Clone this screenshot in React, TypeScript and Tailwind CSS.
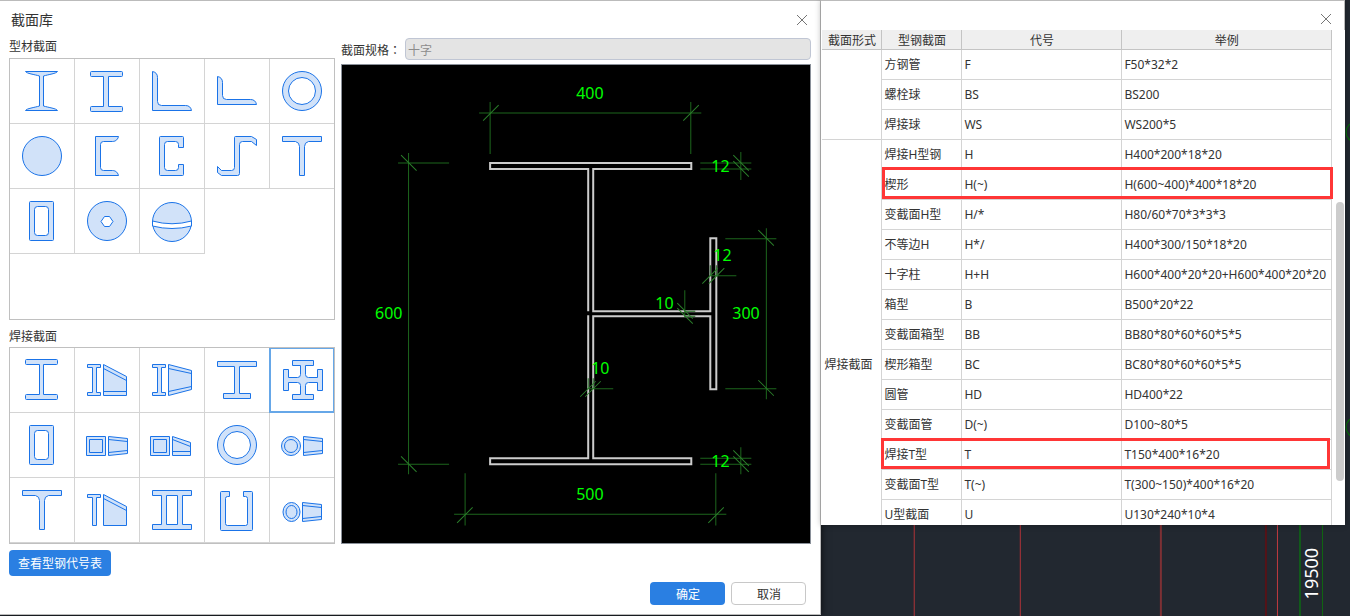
import React from "react";

interface SectionShape {
    id: string;
    label: string;
    icon: React.ReactNode;
}

interface CodeRow {
    name: string;
    code: string;
    example: string;
}

const Ring = () => (
    <>
        <circle cx="32" cy="32" r="19.5" />
        <circle cx="32" cy="32" r="13.5" className="fill-white" />
    </>
);

const Box = () => (
    <>
        <rect x="19.5" y="12.5" width="24" height="39" rx="1" />
        <rect x="24.5" y="17.5" width="14" height="29" rx="3" className="fill-white" />
    </>
);

const Tee = () => <path d="M12.5 12.5h39v5h-13q-4 1-4 5v29h-5v-29q0-4-4-5h-13z" />;

const SmallBeam = () => (
    <path d="M12.5 16.5h13v3h-4v25h4v3h-13v-3h5v-25h-5z" />
);

const Square = () => (
    <>
        <path d="M11.5 23.5h19v19h-19z" />
        <path d="M14.5 26.5h13v13h-13z" />
    </>
);

const Cone = () => (
    <>
        <path d="M33.5 23.5l19 2v15l-19 2z" />
        <path d="M33.5 26.5l19 2M33.5 39.5l19-2" />
    </>
);

const profileSections: SectionShape[] = [
    {
        id: "i-beam",
        label: "工字钢",
        icon: <path d="M15.5 12.5h32c-1 2-9 3-14 4.5v30c5 1.5 13 2.5 14 4.5h-32c1-2 9-3 14-4.5v-30c-5-1.5-13-2.5-14-4.5z" />,
    },
    {
        id: "h-beam",
        label: "H型钢",
        icon: <path d="M16.5 12.5h30q1 0 1 1v3q0 1-1 1h-13v30h13q1 0 1 1v3q0 1-1 1h-30q-1 0-1-1v-3q0-1 1-1h12v-30h-12q-1 0-1-1v-3q0-1 1-1z" />,
    },
    {
        id: "angle",
        label: "等边角钢",
        icon: <path d="M12.5 12.5q5 1 5 6v24q0 4 4 4h24q5 0 6 5h-39z" />,
    },
    {
        id: "unequal-angle",
        label: "不等边角钢",
        icon: <path d="M12.5 17.5q5 1 5 6v13q0 4 4 4h24q5 0 6 5h-39z" />,
    },
    { id: "pipe", label: "圆管", icon: <Ring /> },
    { id: "round", label: "圆钢", icon: <circle cx="32" cy="32" r="19.5" /> },
    {
        id: "channel",
        label: "槽钢",
        icon: <path d="M20.5 12.5h23c-1 4-4 5-6 5h-9q-3 0-3 3v23q0 3 3 3h9c2 0 5 1 6 5h-23z" />,
    },
    {
        id: "c-steel",
        label: "C型钢",
        icon: <path d="M20.5 12.5h22q1 0 1 1v10h-5v-3q0-3-3-3h-8q-3 0-3 3v23q0 3 3 3h8q3 0 3-3v-3h5v10q0 1-1 1h-22q-1 0-1-1v-37q0-1 1-1z" />,
    },
    {
        id: "z-steel",
        label: "Z型钢",
        icon: <path d="M30.5 12.5h16l5 3v6l-5-4h-9q-3 0-3 3v29q0 2-2 2h-16l-4-3v-6l4 4h10q3 0 3-3v-30q0-1 1-1z" />,
    },
    { id: "t-steel", label: "T型钢", icon: <Tee /> },
    { id: "square-pipe", label: "方钢管", icon: <Box /> },
    {
        id: "bolt-ball",
        label: "螺栓球",
        icon: (
            <>
                <circle cx="32" cy="32" r="19.5" />
                <path d="M29.5 27.5h5l3.5 5-3.5 5h-5l-3.5-5z" className="fill-white" />
            </>
        ),
    },
    {
        id: "weld-ball",
        label: "焊接球",
        icon: (
            <>
                <circle cx="32" cy="33" r="19.5" />
                <path d="M12.5 32q19.5 5.5 39 0v5q-19.5 5-39 0z" className="fill-white" />
            </>
        ),
    },
];

const weldedSections: SectionShape[] = [
    {
        id: "welded-h",
        label: "焊接H型钢",
        icon: <path d="M16.5 11.5h30q1 0 1 1v3q0 1-1 1h-13v30h13q1 0 1 1v3q0 1-1 1h-30q-1 0-1-1v-3q0-1 1-1h13v-30h-13q-1 0-1-1v-3q0-1 1-1z" />,
    },
    {
        id: "wedge",
        label: "楔形",
        icon: (
            <>
                <SmallBeam />
                <path d="M28.5 16.5l23 12v19h-23z" />
                <path d="M28.5 20.5l23 12M28.5 43.5h23" />
            </>
        ),
    },
    {
        id: "variable-h",
        label: "变截面H型",
        icon: (
            <>
                <SmallBeam />
                <path d="M28.5 16.5l23 6v19l-23 6z" />
                <path d="M28.5 20.5l23 5M28.5 43.5l23-5" />
            </>
        ),
    },
    {
        id: "unequal-h",
        label: "不等边H",
        icon: <path d="M12.5 13.5h39v5h-17v27h11v5h-27v-5h11v-27h-17z" />,
    },
    {
        id: "cross",
        label: "十字柱",
        icon: <path d="M22.5 12.5h21v5h-8v9q0 3 3 3h9v-8h5v21h-5v-8h-9q-3 0-3 3v9h8v5h-21v-5h8v-9q0-3-3-3h-9v8h-5v-21h5v8h9q3 0 3-3v-9h-8z" />,
    },
    { id: "box", label: "箱型", icon: <Box /> },
    {
        id: "variable-box",
        label: "变截面箱型",
        icon: (
            <>
                <Square />
                <Cone />
            </>
        ),
    },
    {
        id: "wedge-box",
        label: "楔形箱型",
        icon: (
            <>
                <g transform="translate(-1 0)">
                    <Square />
                </g>
                <path d="M32.5 23.5l18 6v13h-18z" />
                <path d="M32.5 26.5l18 7M32.5 38.5h18" />
            </>
        ),
    },
    { id: "welded-pipe", label: "圆管", icon: <Ring /> },
    {
        id: "variable-pipe",
        label: "变截面管",
        icon: (
            <>
                <circle cx="21" cy="33" r="9.5" />
                <circle cx="21" cy="33" r="6.5" />
                <Cone />
            </>
        ),
    },
    { id: "welded-t", label: "焊接T型", icon: <Tee /> },
    {
        id: "variable-t",
        label: "变截面T型",
        icon: (
            <>
                <path d="M12.5 16.5h13v3h-4v28h-4v-28h-5z" />
                <path d="M28.5 16.5l23 12v19h-23z" />
                <path d="M28.5 20.5l23 12" />
            </>
        ),
    },
    {
        id: "double-web",
        label: "双腹板",
        icon: (
            <>
                <path d="M12.5 12.5h39v5h-9v29h9v5h-39v-5h9v-29h-9z" />
                <path d="M26.5 17.5h11v29h-11z" className="fill-white" />
            </>
        ),
    },
    {
        id: "u-section",
        label: "U型截面",
        icon: <path d="M16.5 13.5h8v5h-2q-2 0-2 2v25q0 2 2 2h18q2 0 2-2v-25q0-2-2-2h-2v-5h8q1 0 1 1v37q0 1-1 1h-30q-1 0-1-1v-37q0-1 1-1z" />,
    },
    {
        id: "ellipse-pipe",
        label: "椭圆管",
        icon: (
            <>
                <ellipse cx="21.5" cy="34" rx="8.5" ry="9.5" />
                <ellipse cx="21.5" cy="34" rx="5.5" ry="6.5" />
                <g transform="translate(-1 1)">
                    <Cone />
                </g>
            </>
        ),
    },
];

const profileRows: CodeRow[] = [
    { name: "方钢管", code: "F", example: "F50*32*2" },
    { name: "螺栓球", code: "BS", example: "BS200" },
    { name: "焊接球", code: "WS", example: "WS200*5" },
];

const weldedRows: CodeRow[] = [
    { name: "焊接H型钢", code: "H", example: "H400*200*18*20" },
    { name: "楔形", code: "H(~)", example: "H(600~400)*400*18*20" },
    { name: "变截面H型", code: "H/*", example: "H80/60*70*3*3*3" },
    { name: "不等边H", code: "H*/", example: "H400*300/150*18*20" },
    { name: "十字柱", code: "H+H", example: "H600*400*20*20+H600*400*20*20" },
    { name: "箱型", code: "B", example: "B500*20*22" },
    { name: "变截面箱型", code: "BB", example: "BB80*80*60*60*5*5" },
    { name: "楔形箱型", code: "BC", example: "BC80*80*60*60*5*5" },
    { name: "圆管", code: "HD", example: "HD400*22" },
    { name: "变截面管", code: "D(~)", example: "D100~80*5" },
    { name: "焊接T型", code: "T", example: "T150*400*16*20" },
    { name: "变截面T型", code: "T(~)", example: "T(300~150)*400*16*20" },
    { name: "U型截面", code: "U", example: "U130*240*10*4" },
    { name: "", code: "", example: "" },
    { name: "", code: "", example: "" },
];

const CloseButton = () => (
    <button type="button" aria-label="关闭" className="flex h-5 w-5 items-center justify-center">
        <svg viewBox="0 0 12 12" className="h-3 w-3 fill-none stroke-[#757575]">
            <path d="M1 1l10 10M11 1L1 11" />
        </svg>
    </button>
);

interface SectionGridProps {
    items: SectionShape[];
    selected?: string;
    className?: string;
}

const SectionGrid: React.FC<SectionGridProps> = ({ items, selected, className = "" }) => (
    <div className={`border border-[#c0c0c0] ${className}`}>
        <div className="grid grid-cols-[repeat(4,65px)_64px]">
            {items.map((item) => (
                <button
                    key={item.id}
                    type="button"
                    aria-label={item.label}
                    className={`h-[65px] border-r border-b nth-[5n]:border-r-0 ${
                        item.id === selected
                            ? "border-b-[#66a7e8] shadow-[inset_0_0_0_1px_#66a7e8,-1px_0_0_0_#66a7e8]"
                            : "border-[#d4d4d4]"
                    }`}
                >
                    <svg viewBox="0 0 64 64" className="h-16 w-16 fill-[#d1e2f9] stroke-[#1a73e8]">
                        {item.icon}
                    </svg>
                </button>
            ))}
        </div>
    </div>
);

const SectionDrawing = () => (
    <svg
        viewBox="342 65 468 478"
        className="block h-auto w-full border border-[#8a9099] bg-black fill-none"
    >
        {/* Steel outline */}
        <path
            d="M588 311V169H490V163H691V169H593V311H710V238H716V389H710V316H593V458H691V464H490V458H588V315"
            className="stroke-[#cccccc] stroke-2"
        />
        {/* Dimension lines */}
        <g className="stroke-[#1d661d]">
            <path d="M479 113H701M490 102V154M690.5 102V154" />
            <path d="M408.5 153V474M398 163H449M398 464H449" />
            <path d="M454 514H726M465 473V525M715.5 473V525" />
            <path d="M700 163H751M700 169H751M740.5 152V180" />
            <path d="M700 458H751M700 464H751M740.5 447V474" />
            <path d="M766 228V399M725 238.5H776M725 388.5H776" />
            <path d="M710 265V276M716 265V276M709 275.5H736" />
            <path d="M684.5 290V317M684 311H695M684 316H695" />
            <path d="M588 378V389M593 378V389M587 388.5H613" />
        </g>
        <g className="stroke-[#2a7d2a]">
            <path d="M483 120.5l15.5-15.5M683 120.5l15.5-15.5" />
            <path d="M401 155l15.5 15.5M401 456l15.5 15.5" />
            <path d="M457 522.5l15.5-15.5M708 522.5l15.5-15.5" />
            <path d="M733 155l15.5 15.5M733 161l15.5 15.5" />
            <path d="M733 450l15.5 15.5M733 456l15.5 15.5" />
            <path d="M758 230l15.5 15.5M758 380l15.5 15.5" />
            <path d="M702 283.5l15.5-15.5M708.5 283.5l15.5-15.5" />
            <path d="M677 303l15.5 15.5M677 308l15.5 15.5" />
            <path d="M580 396.5l15.5-15.5M585 396.5l15.5-15.5" />
        </g>
        <g className="fill-[#00ff00] text-base">
            <text x="576" y="99">400</text>
            <text x="711" y="172">12</text>
            <text x="375" y="319">600</text>
            <text x="713" y="261">12</text>
            <text x="655" y="309">10</text>
            <text x="732" y="319">300</text>
            <text x="591" y="374">10</text>
            <text x="576" y="500">500</text>
            <text x="711" y="467">12</text>
        </g>
    </svg>
);

interface CodeGroupProps {
    title: string;
    rows: CodeRow[];
}

const cell = "h-[30px] border-r border-b border-[#d4d4d4] px-0.5";

const CodeGroup: React.FC<CodeGroupProps> = ({ title, rows }) => (
    <tbody>
        {rows.map((row, i) => (
            <tr key={i}>
                {i === 0 && (
                    <td rowSpan={rows.length} className={cell}>
                        {title}
                    </td>
                )}
                <td className={cell}>{row.name}</td>
                <td className={cell}>{row.code}</td>
                <td className={cell}>{row.example}</td>
            </tr>
        ))}
    </tbody>
);

const CodeTablePanel = () => (
    <div className="relative z-20 mr-[5px] h-[525px] overflow-hidden border-t border-[#bbbbbb] bg-white shadow-[0_0_6px_rgba(0,0,0,0.3)]">
        <div className="flex h-[29px] items-start justify-end border-r border-[#bbbbbb] pt-2 pr-2">
            <CloseButton />
        </div>
        <div className="relative pr-[13px] pl-px">
            <table className="w-full table-fixed border-separate border-spacing-0 text-left whitespace-nowrap">
                <colgroup>
                    <col className="w-[60px]" />
                    <col className="w-20" />
                    <col className="w-40" />
                    <col />
                </colgroup>
                <thead>
                    <tr>
                        {["截面形式", "型钢截面", "代号", "举例"].map((title) => (
                            <th
                                key={title}
                                className="h-5 border-r border-b border-[#c4c4c4] bg-[#efefef] px-0 pt-0.5 pb-0 text-center leading-4 font-normal"
                            >
                                {title}
                            </th>
                        ))}
                    </tr>
                </thead>
                <CodeGroup title="" rows={profileRows} />
                <CodeGroup title="焊接截面" rows={weldedRows} />
            </table>
            {/* Marked rows */}
            <div className="absolute top-[137px] right-3 left-[61px] h-8 border-3 border-[#ff3636]"></div>
            <div className="absolute top-[408px] right-[15px] left-[60px] h-[31px] border-3 border-[#ff3636]"></div>
            {/* Scrollbar */}
            <div className="absolute top-[172px] right-px h-[279px] w-2 rounded-full bg-[#cccccc]"></div>
        </div>
    </div>
);

const CadBackground = () => (
    <svg
        viewBox="0 0 1350 616"
        preserveAspectRatio="xMaxYMax slice"
        className="absolute inset-0 h-full w-full fill-none"
    >
        <path d="M914.5 520V616M1020.5 520V616" className="stroke-[#b03338]" />
        <path d="M1161 520V616" className="stroke-[#7d3034] stroke-2" />
        <path d="M1266 520V616" className="stroke-[#551318] stroke-2" />
        <path d="M1277.5 520V616" className="stroke-[#c23a3f]" />
        <path d="M1300 520V616" className="stroke-[#115a1a] stroke-2" />
        <path d="M1322.5 520V616" className="stroke-[#116611]" />
        <circle cx="1356" cy="132" r="10" className="stroke-[#007a00]" />
        <circle cx="1356" cy="427" r="10" className="stroke-[#007a00]" />
        <text transform="translate(1318 599) rotate(-90)" className="fill-white text-lg">
            19500
        </text>
    </svg>
);

const App: React.FC = () => {
    return (
        <div className="relative flex min-h-screen items-stretch overflow-hidden bg-[#222830] font-['Noto_Sans','Noto_Sans_CJK_SC',sans-serif] text-xs text-[#333333]">
            <CadBackground />

            {/* Section library dialog */}
            <div className="relative z-10 mb-px flex flex-[821] flex-col border-t border-r border-b border-[#bbbbbb] bg-white shadow-[0_0_8px_rgba(0,0,0,0.7)]">
                <div className="flex h-[37px] items-center justify-between pr-2 pl-[11px]">
                    <h1 className="text-sm">截面库</h1>
                    <CloseButton />
                </div>

                <div className="flex gap-1.5 pr-[9px] pl-[9px]">
                    <div className="w-[326px] shrink-0">
                        <h2 className="h-5 leading-[18px]">型材截面</h2>
                        <SectionGrid items={profileSections} className="h-[262px]" />
                        <h2 className="h-[27px] pt-2 leading-[18px]">焊接截面</h2>
                        <SectionGrid items={weldedSections} selected="cross" />
                    </div>

                    <div className="min-w-0 flex-1">
                        <div className="mb-1 flex items-center gap-1">
                            <label htmlFor="spec" className="shrink-0 pt-0.5">
                                截面规格<span className="font-['Noto_Sans_CJK_TC',sans-serif]" lang="zh-TW">：</span>
                            </label>
                            <input
                                id="spec"
                                type="text"
                                disabled
                                defaultValue="十字"
                                className="h-[22px] min-w-0 flex-1 rounded-sm border border-[#c0c6d4] bg-[#e4e4e4] px-0.5 pt-0.5 text-[#8c8c8c]"
                            />
                        </div>
                        <SectionDrawing />
                    </div>
                </div>

                <div className="px-[9px] pt-1.5">
                    <button type="button" className="h-[26px] rounded-sm bg-[#2a7fe2] px-[9px] pt-0.5 text-white">
                        查看型钢代号表
                    </button>
                </div>
                <div className="flex justify-end gap-1.5 pt-1.5 pr-[14px] pb-[9px]">
                    <button type="button" className="h-[23px] w-[75px] rounded-sm bg-[#2a7fe2] pt-0.5 text-white">
                        确定
                    </button>
                    <button type="button" className="h-[23px] w-[75px] rounded-sm border border-[#c8c8c8] bg-white pt-0.5">
                        取消
                    </button>
                </div>
            </div>

            {/* Steel code table */}
            <div className="flex-[529]">
                <CodeTablePanel />
            </div>
        </div>
    );
};

export default App;
